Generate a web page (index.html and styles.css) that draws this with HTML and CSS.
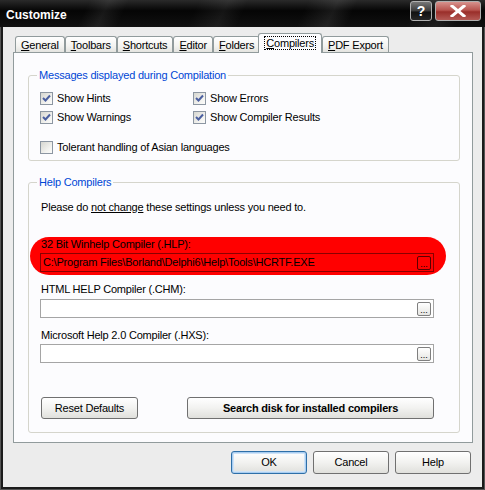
FILE: index.html
```html
<!DOCTYPE html>
<html>
<head>
<meta charset="utf-8">
<link rel="stylesheet" href="styles.css">
</head>
<body>
<div class="window">
  <div class="titlebar">
    <span class="title">Customize</span>
    <div class="tb-buttons">
      <span class="tb-btn tb-help">?</span>
      <span class="tb-btn tb-close">
        <svg width="16" height="12" viewBox="0 0 16 12"><path d="M2 1 L14 11 M14 1 L2 11" stroke="#fff" stroke-width="3" stroke-linecap="square"/></svg>
      </span>
    </div>
  </div>
  <div class="client">
    <div class="tabs">
      <span class="tab"><u>G</u>eneral</span>
      <span class="tab"><u>T</u>oolbars</span>
      <span class="tab"><u>S</u>hortcuts</span>
      <span class="tab"><u>E</u>ditor</span>
      <span class="tab"><u>F</u>olders</span>
      <span class="tab active"><span class="focus"><u>C</u>ompilers</span></span>
      <span class="tab"><u>P</u>DF Export</span>
    </div>
    <div class="panel">
      <fieldset class="group g1">
        <legend>Messages displayed during Compilation</legend>
        <div class="group-body g1-body">
          <div class="checks">
            <label class="check"><span class="box"><svg width="11" height="11" viewBox="0 0 11 11"><path d="M2 5 L4.5 7.5 L9 2.5" fill="none" stroke="#4b5fa0" stroke-width="2"/></svg></span>Show Hints</label>
            <label class="check"><span class="box"><svg width="11" height="11" viewBox="0 0 11 11"><path d="M2 5 L4.5 7.5 L9 2.5" fill="none" stroke="#4b5fa0" stroke-width="2"/></svg></span>Show Errors</label>
            <label class="check"><span class="box"><svg width="11" height="11" viewBox="0 0 11 11"><path d="M2 5 L4.5 7.5 L9 2.5" fill="none" stroke="#4b5fa0" stroke-width="2"/></svg></span>Show Warnings</label>
            <label class="check"><span class="box"><svg width="11" height="11" viewBox="0 0 11 11"><path d="M2 5 L4.5 7.5 L9 2.5" fill="none" stroke="#4b5fa0" stroke-width="2"/></svg></span>Show Compiler Results</label>
          </div>
          <label class="check tolerant"><span class="box"></span>Tolerant handling of Asian languages</label>
        </div>
      </fieldset>
      <fieldset class="group g2">
        <legend>Help Compilers</legend>
        <div class="group-body g2-body">
          <p class="note">Please do <u>not change</u> these settings unless you need to.</p>
          <div class="highlight">
            <div class="field-label">32 Bit Winhelp Compiler (.HLP):</div>
            <div class="input">C:\Program Files\Borland\Delphi6\Help\Tools\HCRTF.EXE<span class="dots">...</span></div>
          </div>
          <div class="field-label lbl-html">HTML HELP Compiler (.CHM):</div>
          <div class="input"><span class="dots">...</span></div>
          <div class="field-label lbl-ms">Microsoft Help 2.0 Compiler (.HXS):</div>
          <div class="input"><span class="dots">...</span></div>
          <div class="actions">
            <span class="btn btn-reset">Reset Defaults</span>
            <span class="btn btn-search">Search disk for installed compilers</span>
          </div>
        </div>
      </fieldset>
    </div>
    <div class="dlg-buttons">
      <span class="btn dlg ok">OK</span>
      <span class="btn dlg">Cancel</span>
      <span class="btn dlg">Help</span>
    </div>
  </div>
</div>
</body>
</html>
```

FILE: styles.css
```css
* { box-sizing: border-box; }
body {
  margin: 0;
  font: 11px/13px "Liberation Sans", Arial, sans-serif;
  letter-spacing: -0.2px;
  color: #000;
}
.window {
  width: 485px;
  height: 490px;
  display: flex;
  flex-direction: column;
  background: #1b1b1b;
  box-shadow: inset 1px 0 #555, inset -1px 0 #555, inset 0 -1px #555;
}
.titlebar {
  flex: 0 0 27px;
  display: flex;
  justify-content: space-between;
  align-items: flex-start;
  padding: 0 4px 0 6px;
  background:
    linear-gradient(115deg, transparent 0 18%, rgba(255,255,255,0.07) 22%, transparent 26% 40%, rgba(255,255,255,0.06) 46%, transparent 50% 62%, rgba(255,255,255,0.08) 68%, transparent 72% 84%, rgba(255,255,255,0.06) 90%, transparent 94%),
    linear-gradient(#2a2a2a, #050505 40%, #111);
}
.title {
  color: #fff;
  font-weight: bold;
  font-size: 12px;
  line-height: 14px;
  letter-spacing: 0;
  margin-top: 8px;
}
.tb-buttons { display: flex; gap: 3px; margin-top: 1px; }
.tb-btn {
  height: 20px;
  border: 1px solid #b0b0b0;
  border-radius: 3px;
  display: flex;
  align-items: center;
  justify-content: center;
  color: #fff;
  font-weight: bold;
  font-size: 14px;
  letter-spacing: 0;
}
.tb-help {
  width: 22px;
  background: linear-gradient(#777, #3a3a3a 50%, #111 55%, #262626);
}
.tb-close {
  width: 46px;
  background: linear-gradient(#d7928d, #b8544f 45%, #9a2e2a 55%, #b45a55);
}
.client {
  flex: 1;
  margin: 0 3px 3px;
  background: #ececec;
  display: flex;
  flex-direction: column;
  padding-top: 6px;
}
.tabs {
  display: flex;
  align-items: flex-end;
  height: 19px;
  margin-left: 12px;
  position: relative;
  z-index: 1;
}
.tab {
  height: 16px;
  border: 1px solid #919b9c;
  border-bottom: 0;
  border-radius: 3px 3px 0 0;
  padding: 1px 5px 0 5px;
  background: linear-gradient(#ffffff, #f3f3f0 60%, #e4e4e0);
  line-height: 14px;
  white-space: nowrap;
}
.tab.active {
  height: 20px;
  margin: 0 -1px -1px -2px;
  padding: 2px 6px 0 6px;
  background: #fcfcfe;
}
.tab.active + .tab { margin-left: 1px; }
.focus {
  outline: 1px dotted #000;
  outline-offset: 0;
  padding: 0 1px;
}
.panel {
  height: 391px;
  margin: 0 9px 0 10px;
  border: 1px solid #919b9c;
  background: #fcfcfe;
}
.group {
  margin: 16px 12px 0 14px;
  padding: 0;
  border: 1px solid #d5d5cc;
  border-radius: 3px;
  min-width: 0;
}
.group legend {
  margin-left: 8px;
  padding: 0 2px;
  color: #0046d5;
  line-height: 13px;
}
.group-body { padding-left: 11px; }
.g1-body { padding-top: 7px; padding-bottom: 3px; }
.checks {
  display: grid;
  grid-template-columns: 153px auto;
}
.check {
  display: flex;
  align-items: center;
  gap: 4px;
  height: 19px;
}
.box {
  width: 13px;
  height: 13px;
  border: 1px solid #8c96a2;
  background: linear-gradient(135deg, #d6d6d0, #f4f4f1 70%, #fbfbfa);
  display: flex;
  align-items: center;
  justify-content: center;
}
.tolerant { margin-top: 11px; }
.g2 { margin-top: 15px; }
.g2-body { padding-top: 12px; padding-bottom: 13px; }
.note { margin: 0; padding-left: 1px; }
.highlight {
  margin: 23px 0 0 -10px;
  width: 416px;
  height: 38px;
  border-radius: 19px;
  background: #ff0000;
  padding: 1px 0 0 10px;
}
.field-label { padding-left: 1px; }
.input {
  margin-top: 2px;
  width: 394px;
  height: 19px;
  border: 1px solid #a5a5a5;
  background: #fff;
  display: flex;
  align-items: center;
  justify-content: space-between;
  padding: 0 2px 0 2px;
  white-space: nowrap;
}
.highlight .input {
  background: transparent;
  border-color: #8a0000;
}
.dots {
  width: 14px;
  height: 14px;
  flex: 0 0 14px;
  margin-left: auto;
  border: 1px solid #7f7f7f;
  border-radius: 2px;
  background: linear-gradient(#ffffff, #e6e6e2);
  font-size: 9px;
  line-height: 14px;
  letter-spacing: 0;
  text-align: center;
  overflow: hidden;
}
.highlight .dots {
  background: transparent;
  border-color: #5a0000;
}
.lbl-html { margin-top: 8px; }
.lbl-html + .input { margin-top: 3px; }
.lbl-ms { margin-top: 11px; }
.actions {
  display: flex;
  gap: 49px;
  margin-top: 34px;
  padding-left: 1px;
}
.btn {
  height: 22px;
  border: 1px solid #707070;
  border-radius: 3px;
  background: linear-gradient(#ffffff, #f2f2f0 50%, #e0e0dc);
  display: flex;
  align-items: center;
  justify-content: center;
  white-space: nowrap;
}
.btn-reset { width: 97px; }
.btn-search { width: 247px; font-weight: bold; }
.dlg-buttons {
  display: flex;
  justify-content: flex-end;
  gap: 6px;
  margin-top: 8px;
  padding-right: 11px;
}
.dlg { width: 76px; height: 23px; }
.ok {
  border-color: #2e6fa8;
  box-shadow: inset 0 0 0 1px #a9cdf0, inset 0 0 0 2px #cfe3f7;
}
```
